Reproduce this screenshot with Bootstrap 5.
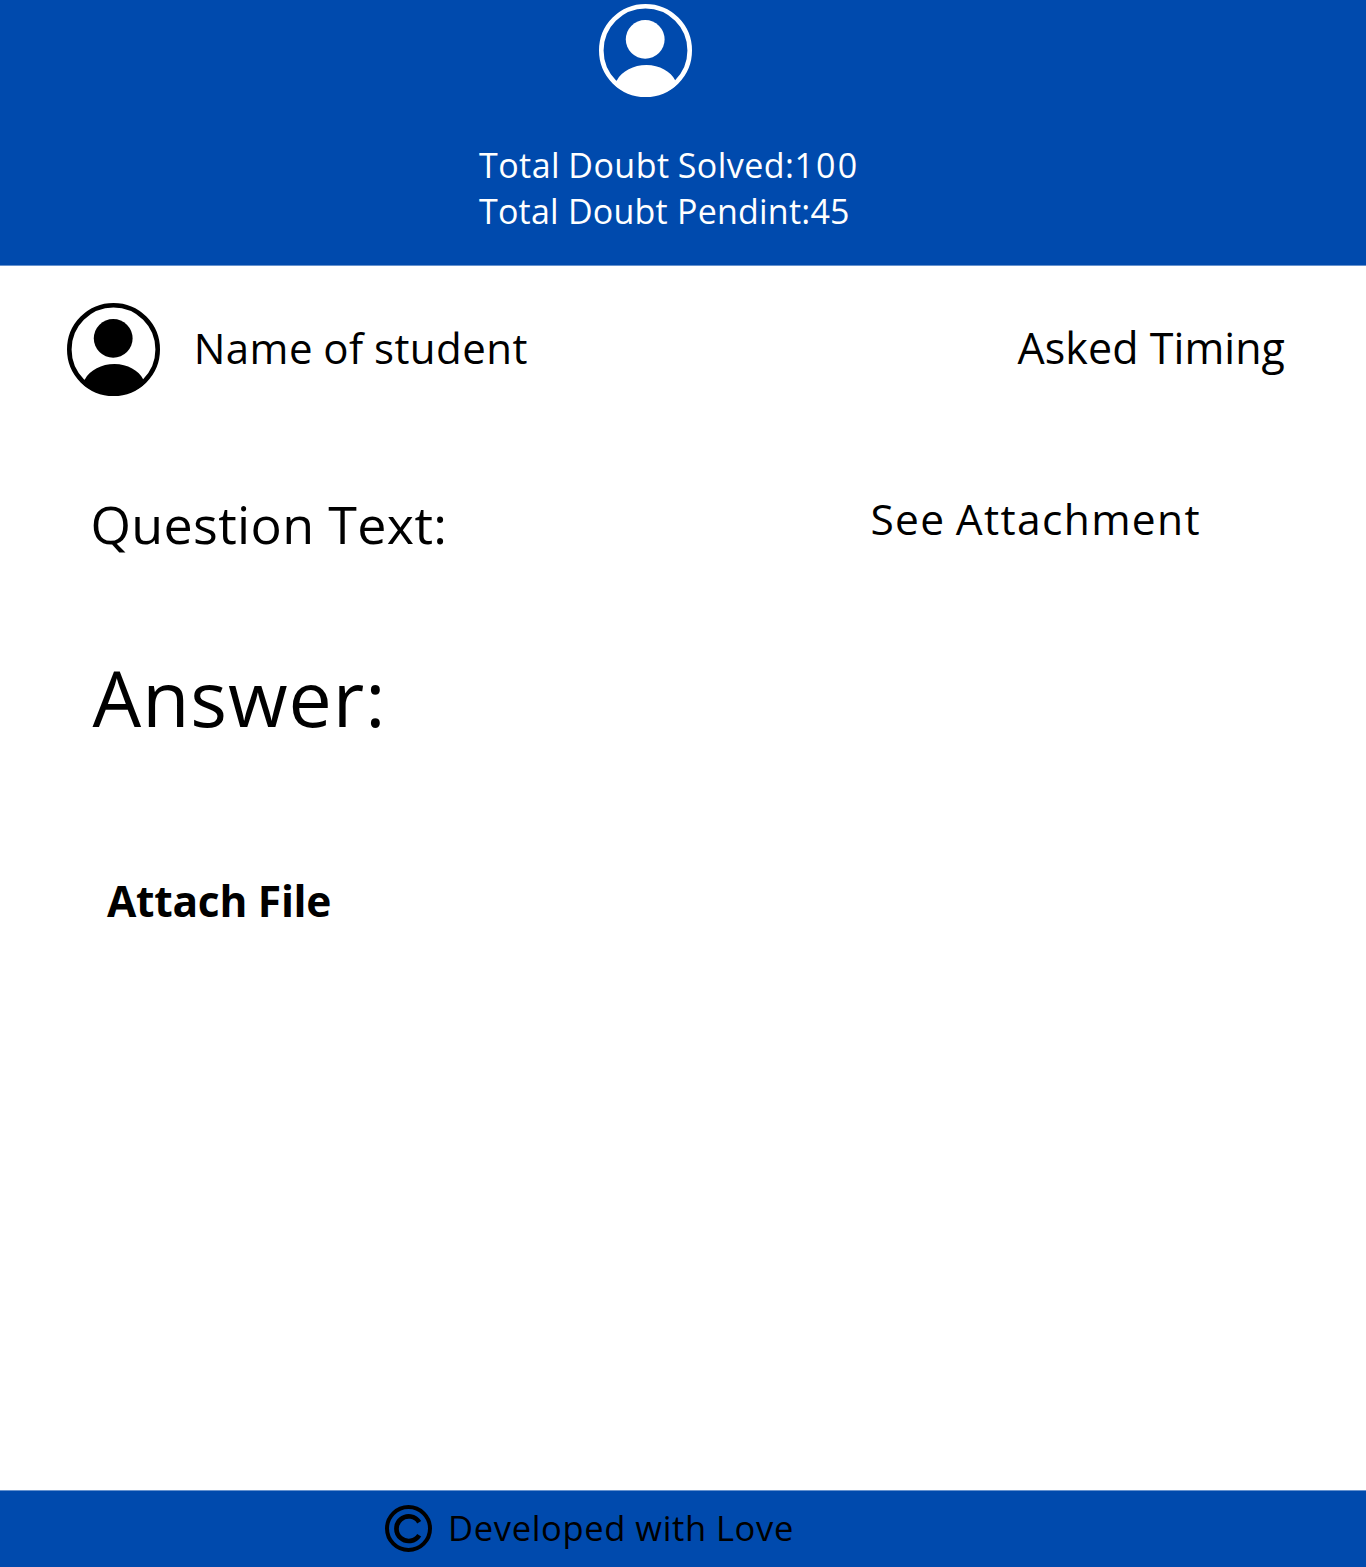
<!DOCTYPE html>
<html lang="en">
<head>
<meta charset="utf-8">
<meta name="viewport" content="width=device-width, initial-scale=1">
<title>Doubt details</title>
<link href="https://cdn.jsdelivr.net/npm/bootstrap@5.3.0/dist/css/bootstrap.min.css" rel="stylesheet">
<style>
  body { font-family: "Open Sans", "Noto Sans", sans-serif; color: #000; background: #fff; white-space: nowrap; }
  .bar-blue { background: #004aad; }
  .top-bar { height: 266px; padding: 4px 0 0 479px; border-bottom: 1px solid #6692ce; color: #fff; }
  .avatar { width: 93px; height: 93px; display: block; flex: none; }
  .top-bar .avatar { margin: 0 0 45px 119.5px; }
  .stat { font-size: 34px; line-height: 46px; letter-spacing: .22px; }
  .stat-solved { letter-spacing: .45px; word-spacing: -1px; }
  .stat-count { letter-spacing: 2.2px; }
  .student-row { padding: 37.3px 81px 0 66.7px; }
  .student-name { font-size: 42px; line-height: 60px; letter-spacing: .45px; word-spacing: -1px; margin: 15px 0 0 34px; }
  .asked-time { font-size: 43px; line-height: 60px; letter-spacing: .05px; margin-top: 15px; }
  .question-row { padding: 93px 165px 0 90.5px; }
  .question-label { font-size: 52px; line-height: 70px; letter-spacing: .35px; }
  .see-link { font-size: 42.5px; line-height: 60px; letter-spacing: 1.35px; word-spacing: -2px; }
  .answer-label { font-size: 77px; line-height: 100px; letter-spacing: .95px; padding: 89px 0 0 92.5px; }
  .attach-label { font-size: 42.5px; line-height: 60px; letter-spacing: -.27px; padding: 123px 0 0 107px; }
  .bottom-bar { height: 77px; padding: 14px 0 0 385px; border-top: 1px solid #6692ce; }
  .copy-icon { width: 47px; height: 47px; flex: none; }
  .credit { font-size: 34.5px; line-height: 46px; letter-spacing: .67px; word-spacing: -.5px; margin-left: 16px; }
</style>
<script src="https://cdn.jsdelivr.net/npm/bootstrap@5.3.0/dist/js/bootstrap.bundle.min.js"></script>
</head>
<body class="d-flex flex-column min-vh-100 overflow-x-hidden">

<header class="bar-blue top-bar">
  <svg class="avatar" viewBox="0 0 93 93" fill="currentColor" aria-label="Profile">
    <circle cx="46.5" cy="46.5" r="44.2" fill="none" stroke="currentColor" stroke-width="4.6"/>
    <circle cx="46.2" cy="35.4" r="19.4"/>
    <path d="M17.8 76.5C23 67 34.5 61 47.5 61C60.5 61 72 67.5 76.3 76.5L79 79.4A46.5 46.5 0 0 1 14.5 79.7Z"/>
  </svg>
  <div class="stat stat-solved">Total Doubt Solved:<span class="stat-count">100</span></div>
  <div class="stat">Total Doubt Pendint:45</div>
</header>

<main class="flex-grow-1">
  <section class="student-row d-flex justify-content-between align-items-start">
    <div class="d-flex align-items-start">
      <svg class="avatar" viewBox="0 0 93 93" fill="currentColor" aria-label="Student">
        <circle cx="46.5" cy="46.5" r="44.2" fill="none" stroke="currentColor" stroke-width="4.6"/>
        <circle cx="46.2" cy="35.4" r="19.4"/>
        <path d="M17.8 76.5C23 67 34.5 61 47.5 61C60.5 61 72 67.5 76.3 76.5L79 79.4A46.5 46.5 0 0 1 14.5 79.7Z"/>
      </svg>
      <div class="student-name">Name of student</div>
    </div>
    <div class="asked-time">Asked Timing</div>
  </section>

  <section class="question-row d-flex justify-content-between align-items-start">
    <div class="question-label">Question Text:</div>
    <div class="see-link">See Attachment</div>
  </section>

  <div class="answer-label">Answer:</div>
  <div class="attach-label fw-bold">Attach File</div>
</main>

<footer class="bar-blue bottom-bar d-flex align-items-start">
  <svg class="copy-icon" viewBox="0 0 47 47" fill="none" stroke="#000" aria-label="Copyright">
    <circle cx="23.5" cy="23.5" r="21.5" stroke-width="4"/>
    <path d="M34.2 17.2A12.3 12.3 0 1 0 34.2 30.2" stroke-width="4.7"/>
  </svg>
  <div class="credit">Developed with Love</div>
</footer>

</body>
</html>
